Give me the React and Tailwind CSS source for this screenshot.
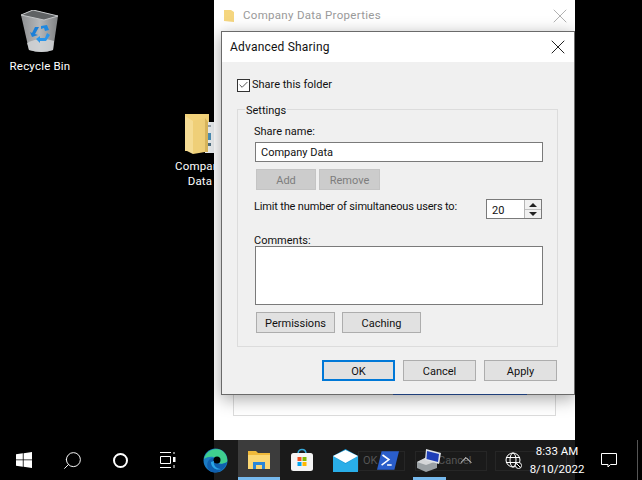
import React from 'react'
import { Check, X, Search, ChevronUp } from 'lucide-react'

const font = { fontFamily: 'Roboto, "Liberation Sans", sans-serif' }

function RecycleBin() {
  return (
    <svg width="40" height="44" viewBox="0 0 40 44">
      <defs>
        <linearGradient id="bin" x1="0" x2="1" y1="0" y2="0">
          <stop offset="0" stopColor="#8d8f91" />
          <stop offset="0.5" stopColor="#b5b7b9" />
          <stop offset="1" stopColor="#7f8183" />
        </linearGradient>
      </defs>
      <path d="M1 5 L13 0 L38 6 L33 40 Q22 44 9 40 Z" fill="url(#bin)" />
      <path d="M1 5 L13 0 L38 6 L24 10 Z" fill="#5f6264" stroke="#c4c6c8" strokeWidth="1" />
      <path d="M7 33 Q20 26 34 31 L33 40 Q22 44 9 40 Z" fill="#d5d7d9" opacity="0.8" />
      <path d="M21 16 L27 15 L29 20 L25 21 L24 18 L21 19 Z" fill="#1e88e0" />
      <path d="M15 17 L19 17 L15 24 L18 25 L12 27 L10 22 L12 23 Z" fill="#1a7fd8" />
      <path d="M27 23 L30 25 L26 31 L20 31 L20 33 L16 29 L20 26 L20 28 L25 28 Z" fill="#2a95ea" />
    </svg>
  )
}

function FolderIcon() {
  return (
    <svg width="30" height="42" viewBox="0 0 30 42">
      <path d="M1 1 H25 V38 H1 Z" fill="#f2d27a" />
      <rect x="21" y="9" width="9" height="31" fill="#e9ecee" />
      <rect x="23" y="20" width="4" height="7" fill="#4d8fb5" />
      <rect x="23" y="12" width="4" height="2" fill="#9aa5ad" />
      <rect x="23" y="30" width="4" height="3" fill="#4f6f80" />
      <path d="M1 3 L9 8 V41 L1 37 Z" fill="#f5dc94" />
      <path d="M9 8 L21 5 V39 L9 41 Z" fill="#efcf78" />
      <path d="M21 5 L24 9 V39 H21 Z" fill="#d9b65c" />
    </svg>
  )
}

function WinButton({ children, className = '' }) {
  return (
    <div className={`flex items-center justify-center border border-[#adadad] bg-[#e1e1e1] pt-[3px] text-[11px] text-[#111] ${className}`}>
      {children}
    </div>
  )
}

function PropertiesWindow() {
  return (
    <div className="absolute left-[214px] top-0 flex h-[440px] w-[361px] flex-col bg-white">
      <div className="flex h-[31px] items-center pl-[9px] pr-[3px]">
        <svg width="12" height="14" viewBox="0 0 12 14">
          <path d="M1 1 H8 L11 3 V13 L1 12 Z" fill="#f5d67f" />
        </svg>
        <span className="ml-[8px] mt-[1px] text-[11.5px] tracking-[0.3px] text-[#9a9a9a]">Company Data Properties</span>
        <X className="ml-auto text-[#a8a8a8]" size={24} strokeWidth={0.9} />
      </div>
      <div className="mx-[19px] mt-auto mb-[24px] h-[40px] border border-t-0 border-[#dcdcdc]" />
    </div>
  )
}

function AdvancedSharing() {
  return (
    <div className="absolute left-[221px] top-[31px] flex h-[364px] w-[354px] flex-col border border-[#6a6a6a] bg-[#f0f0f0] shadow-[0_4px_16px_rgba(0,0,0,0.35)]">
      <div className="flex h-[30px] shrink-0 items-center bg-white pl-[8px] pr-[4px]">
        <span className="text-[12px] tracking-[0.2px] text-[#111]">Advanced Sharing</span>
        <X className="ml-auto text-[#222]" size={24} strokeWidth={1} />
      </div>

      <div className="flex flex-1 flex-col pl-[15px] pr-[16px]">
        <div className="mt-[16px] flex h-[14px] items-center">
          <div className="flex h-[13px] w-[13px] items-center justify-center border border-[#333] bg-white">
            <Check size={12} strokeWidth={2} className="text-[#444]" />
          </div>
          <span className="ml-[2px] mt-[1px] text-[11px] text-[#111]">Share this folder</span>
        </div>

        <div className="mt-[17px] flex h-[238px] flex-col border border-[#dcdcdc] pl-[17px] pr-[14px]">
          <div className="-ml-[10px] -mt-[8px] flex h-[16px] w-fit items-center bg-[#f0f0f0] px-[1px] pt-[2px] text-[11px] text-[#111]">
            Settings
          </div>
          <div className="-ml-[1px] mt-[6px] h-[16px] text-[11px] leading-[16px] text-[#111]">Share name:</div>
          <div className="mt-[2px] flex h-[20px] w-[288px] items-center border border-[#7a7a7a] bg-white pl-[5px] pt-[2px] text-[11px] text-[#111]">
            Company Data
          </div>
          <div className="ml-[1px] mt-[7px] flex gap-[3px]">
            <WinButton className="h-[21px] w-[60px] !border-[#c4c4c4] !bg-[#cccccc] !text-[#7d7d7d]">Add</WinButton>
            <WinButton className="h-[21px] w-[61px] !border-[#c4c4c4] !bg-[#cccccc] !text-[#7d7d7d]">Remove</WinButton>
          </div>
          <div className="mt-[9px] flex h-[20px] items-start">
            <span className="-ml-[1px] whitespace-nowrap text-[11px] leading-[15px] tracking-[-0.16px] text-[#111]">Limit the number of simultaneous users to:</span>
            <div className="ml-auto mr-[1px] flex h-[20px] w-[56px] border border-[#7a7a7a] bg-white">
              <span className="ml-[5px] text-[11px] leading-[21px] text-[#111]">20</span>
              <div className="ml-auto flex w-[17px] flex-col items-center justify-center gap-[2px] border-l border-[#b5b5b5] bg-[#f0f0f0]">
                <div className="h-0 w-0 border-x-[4px] border-b-[4px] border-x-transparent border-b-[#222]" />
                <div className="h-[1px] w-full bg-[#c0c0c0]" />
                <div className="h-0 w-0 border-x-[4px] border-t-[4px] border-x-transparent border-t-[#222]" />
              </div>
            </div>
          </div>
          <div className="-ml-[1px] mt-[13px] h-[15px] pt-[1px] text-[11px] leading-[15px] text-[#111]">Comments:</div>
          <div className="-mt-[1px] h-[59px] w-[288px] border border-[#7a7a7a] bg-white" />
          <div className="ml-[1px] mt-[7px] flex gap-[7px]">
            <WinButton className="h-[21px] w-[79px]">Permissions</WinButton>
            <WinButton className="h-[21px] w-[79px]">Caching</WinButton>
          </div>
        </div>

        <div className="mr-[1px] mt-[13px] flex justify-end gap-[8px]">
          <WinButton className="h-[21px] w-[73px] !border-2 !border-[#0078d7]">OK</WinButton>
          <WinButton className="h-[21px] w-[73px]">Cancel</WinButton>
          <WinButton className="h-[21px] w-[73px]">Apply</WinButton>
        </div>
      </div>
      <div className="absolute -bottom-[1px] left-[171px] h-[1px] w-[134px] bg-[#1f3f7a]" />
    </div>
  )
}

function Taskbar() {
  return (
    <div className="absolute bottom-0 left-0 flex h-[40px] w-[642px] items-center bg-black">
      <div className="absolute left-[214px] top-0 h-[40px] w-[361px] bg-[#1a1a1a]" />
      <div className="absolute left-[358px] top-[11px] flex h-[20px] w-[47px] items-center border border-[#262626] pl-[4px] text-[11px] text-[#555]">OK</div>
      <div className="absolute left-[415px] top-[11px] flex h-[20px] w-[72px] items-center border border-[#262626] pl-[22px] text-[11px] text-[#555]">Cancel</div>
      <div className="absolute left-[495px] top-[11px] h-[20px] w-[72px] border border-[#262626]" />

      <div className="relative flex h-[40px] w-[48px] items-center justify-center">
        <svg width="16" height="16" viewBox="0 0 16 16" fill="#fff">
          <path d="M0 2.3 L6.8 1.3 V7.5 H0 Z M7.6 1.2 L16 0 V7.5 H7.6 Z M0 8.3 H6.8 V14.7 L0 13.7 Z M7.6 8.3 H16 V16 L7.6 14.8 Z" />
        </svg>
      </div>
      <div className="relative flex h-[40px] w-[48px] items-center justify-center">
        <Search size={21} strokeWidth={1.1} className="scale-x-[-1] text-white" />
      </div>
      <div className="relative flex h-[40px] w-[48px] items-center justify-center">
        <div className="h-[15px] w-[15px] rounded-full border-2 border-white" />
      </div>
      <div className="relative flex h-[40px] w-[48px] items-center justify-center">
        <svg width="18" height="16" viewBox="0 0 18 16" fill="none" stroke="#fff" strokeWidth="1">
          <path d="M1 .5 H12 M1 15.5 H12 M1.5 4.5 H11.5 V11.5 H1.5 Z" />
          <rect x="14" y="5" width="2.5" height="5" fill="#fff" stroke="none" />
          <path d="M15 0 V2 M15 13 V16" />
        </svg>
      </div>
      <div className="relative flex h-[40px] w-[46px] items-center justify-center">
        <svg width="25" height="25" viewBox="0 0 25 25">
          <circle cx="12.5" cy="12.5" r="12" fill="#1a7bc4" />
          <path d="M1 11 C3 2 12 -1 18 2 C23 5 25 10 24 14 C20 17 14 16 14 13 C14 9 7 7 1 11 Z" fill="#3fce8f" />
          <path d="M14 13 C14 17 19 17 24 14 C22 21 15 26 9 24 C3 22 3 14 7 11 C9 9 13 10 14 13 Z" fill="#0f5fae" />
          <circle cx="14" cy="12" r="3.5" fill="#000" />
          <path d="M8 14 C8 20 14 23 18 21 C13 21 10 17 11 13 Z" fill="#2aa6e8" />
        </svg>
      </div>
      <div className="relative flex h-[40px] w-[42px] items-center justify-center border-b-[3px] border-[#76b9ed] bg-[#3c3c3c] pt-[2px]">
        <svg width="22" height="18" viewBox="0 0 22 18">
          <path d="M0 0 H8 L10 2 H22 V18 H0 Z" fill="#f0b93a" />
          <rect x="0" y="4" width="22" height="14" fill="#fbd774" />
          <path d="M5 18 V11 H17 V18 H14 V14 H8 V18 Z" fill="#2a86d8" />
        </svg>
      </div>
      <div className="relative flex h-[40px] w-[43px] items-center justify-center">
        <svg width="24" height="24" viewBox="0 0 24 24">
          <path d="M8 6 C8 0 16 0 16 6" fill="none" stroke="#35a8d8" strokeWidth="1.6" />
          <rect x="1" y="5" width="22" height="18" rx="2.5" fill="#f4f4f4" />
          <rect x="7.5" y="9" width="4" height="4" fill="#f25022" />
          <rect x="12.5" y="9" width="4" height="4" fill="#7fba00" />
          <rect x="7.5" y="14" width="4" height="4" fill="#00a4ef" />
          <rect x="12.5" y="14" width="4" height="4" fill="#ffb900" />
        </svg>
      </div>
      <div className="relative flex h-[40px] w-[44px] items-center justify-center">
        <svg width="25" height="23" viewBox="0 0 25 23">
          <path d="M0 7 L12.5 0 L25 7 V23 H0 Z" fill="#1b9ad6" />
          <path d="M0 7 L12.5 15 L25 7 V23 H0 Z" fill="#29aee8" />
          <path d="M0 7 L12.5 1 L25 7 L12.5 14 Z" fill="#ffffff" />
        </svg>
      </div>
      <div className="relative flex h-[40px] w-[41px] items-center justify-center">
        <svg width="22" height="19" viewBox="0 0 24 20">
          <path d="M5 0 H24 L19 20 H0 Z" fill="#2a5ecb" />
          <path d="M6 4 L13 9 L5 15 M11 15 H16" fill="none" stroke="#fff" strokeWidth="1.7" />
        </svg>
      </div>
      <div className="relative flex h-[40px] w-[42px] items-center justify-center">
        <svg width="24" height="24" viewBox="0 0 24 24">
          <path d="M0 14 L10 9 L20 13 V20 L9 24 L0 20 Z" fill="#9aa0a4" />
          <path d="M0 14 L10 9 L20 13 L9 17 Z" fill="#d4d6d8" />
          <path d="M9 1 L24 5 L22 16 L8 12 Z" fill="#dfe3e8" />
          <path d="M10 3 L22 6 L21 14 L9.5 11 Z" fill="#1f3fb8" />
        </svg>
        <div className="absolute bottom-0 left-[5px] h-[3px] w-[33px] bg-[#76b9ed]" />
      </div>
      <ChevronUp size={20} strokeWidth={1.1} className="relative ml-[6px] text-white" />
      <svg width="17" height="17" viewBox="0 0 17 17" fill="none" stroke="#fff" strokeWidth="1" className="relative ml-[29px]">
        <circle cx="8" cy="8" r="7" />
        <ellipse cx="8" cy="8" rx="3" ry="7" />
        <path d="M1 5.5 H15 M1 10.5 H15" />
        <circle cx="13.5" cy="13.5" r="3" fill="#000" />
        <path d="M11.5 11.5 L15.5 15.5" />
      </svg>
      <div className="relative ml-[7px] flex w-[56px] flex-col items-center text-[11.5px] leading-[16px] text-white">
        <span className="-mt-[1px] mb-[2px]">8:33 AM</span>
        <span>8/10/2022</span>
      </div>
      <svg width="16" height="15" viewBox="0 0 16 15" fill="none" stroke="#fff" strokeWidth="1" className="relative ml-[16px]">
        <path d="M.5 .5 H15.5 V11.5 H9.5 L7 14 V11.5 H.5 Z" />
      </svg>
      <div className="absolute right-[4px] top-0 h-[40px] w-[1px] bg-[#555]" />
    </div>
  )
}

export default function App() {
  return (
    <div className="relative h-[480px] w-[642px] overflow-hidden bg-black" style={font}>
      <div className="absolute left-0 top-[10px] flex w-[80px] flex-col items-center">
        <RecycleBin />
        <span className="mt-[4px] text-[11.5px] tracking-[0.2px] text-white">Recycle Bin</span>
      </div>
      <div className="absolute left-[160px] top-[113px] flex w-[80px] flex-col items-center">
        <div className="-ml-[3px]"><FolderIcon /></div>
        <span className="mt-[4px] text-center text-[11.5px] leading-[15px] tracking-[0.2px] text-white">Company<br />Data</span>
      </div>
      <PropertiesWindow />
      <AdvancedSharing />
      <Taskbar />
    </div>
  )
}
